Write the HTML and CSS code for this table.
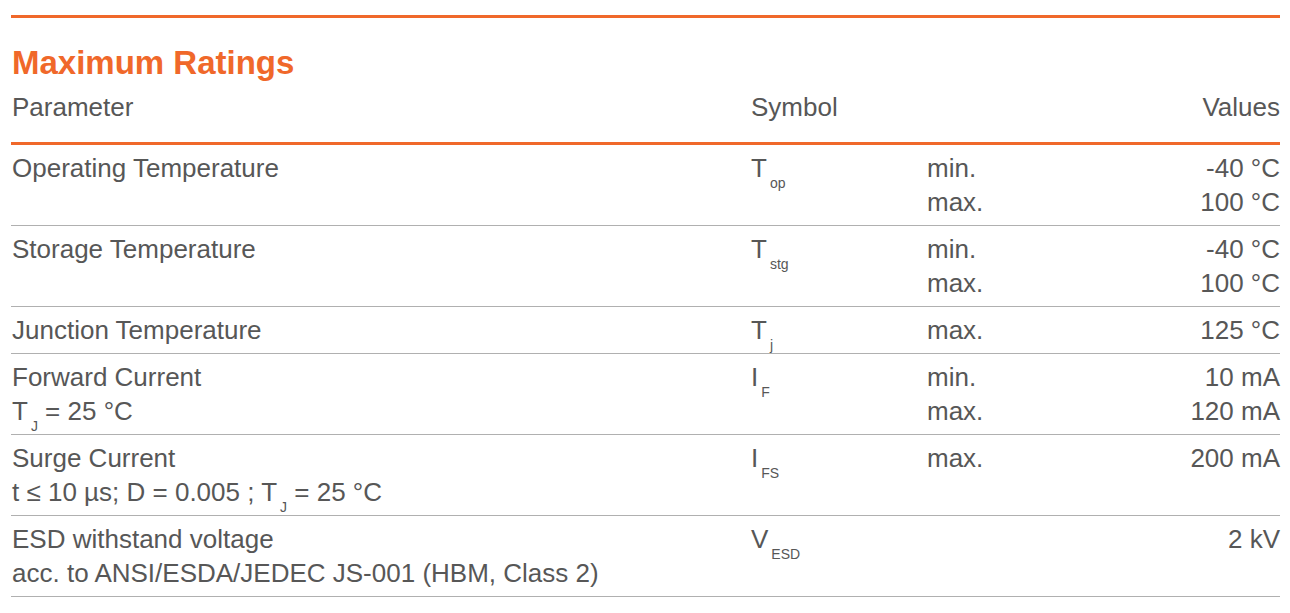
FILE: index.html
```html
<!DOCTYPE html>
<html>
<head>
<meta charset="utf-8">
<link rel="stylesheet" href="styles.css">
</head>
<body>
<div class="sheet">
  <h2 class="title">Maximum Ratings</h2>
  <div class="head">
    <div>Parameter</div>
    <div>Symbol</div>
    <div></div>
    <div class="val">Values</div>
  </div>
  <div class="row">
    <div>Operating Temperature</div>
    <div>T<sub>op</sub></div>
    <div><div>min.</div><div>max.</div></div>
    <div class="val"><div>-40 °C</div><div>100 °C</div></div>
  </div>
  <div class="row">
    <div>Storage Temperature</div>
    <div>T<sub>stg</sub></div>
    <div><div>min.</div><div>max.</div></div>
    <div class="val"><div>-40 °C</div><div>100 °C</div></div>
  </div>
  <div class="row">
    <div>Junction Temperature</div>
    <div>T<sub>j</sub></div>
    <div><div>max.</div></div>
    <div class="val"><div>125 °C</div></div>
  </div>
  <div class="row">
    <div><div>Forward Current</div><div>T<sub>J</sub> = 25 °C</div></div>
    <div>I<sub>F</sub></div>
    <div><div>min.</div><div>max.</div></div>
    <div class="val"><div>10 mA</div><div>120 mA</div></div>
  </div>
  <div class="row">
    <div><div>Surge Current</div><div>t ≤ 10 µs; D = 0.005 ; T<sub>J</sub> = 25 °C</div></div>
    <div>I<sub>FS</sub></div>
    <div><div>max.</div></div>
    <div class="val"><div>200 mA</div></div>
  </div>
  <div class="row">
    <div><div>ESD withstand voltage</div><div>acc. to ANSI/ESDA/JEDEC JS-001 (HBM, Class 2)</div></div>
    <div>V<sub>ESD</sub></div>
    <div></div>
    <div class="val"><div>2 kV</div></div>
  </div>
</div>
</body>
</html>
```
FILE: styles.css
```css
html, body {
  margin: 0;
  padding: 0;
  background: #ffffff;
}
body {
  font-family: "Liberation Sans", Arial, sans-serif;
  color: #575757;
}
.sheet {
  margin: 15px 0 0 11px;
  width: 1269px;
  border-top: 3px solid #f0682a;
}
.title {
  margin: 25px 0 0 1px;
  font-size: 33px;
  line-height: 40px;
  font-weight: bold;
  color: #f0682a;
}
.head, .row {
  display: grid;
  grid-template-columns: 739px 176px 1fr auto;
  font-size: 26px;
  line-height: 34px;
  padding-left: 1px;
}
.head {
  padding-top: 7px;
  padding-bottom: 18px;
  border-bottom: 3px solid #f0682a;
}
.row {
  padding-top: 6px;
  padding-bottom: 6px;
  border-bottom: 1px solid #b0b0b0;
}
.row-tall {
  padding-bottom: 7px;
}
.val {
  text-align: right;
}
sub {
  font-size: 14px;
  line-height: 0;
  vertical-align: -11px;
  margin-left: 3px;
}
```
